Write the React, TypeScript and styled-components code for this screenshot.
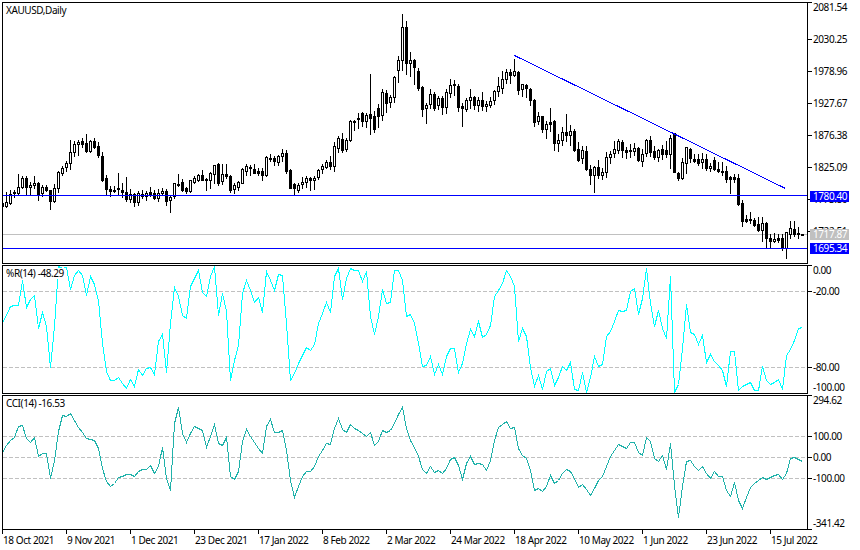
import styled, { createGlobalStyle } from 'styled-components';

// all chart values are read off the 3x crops, so y values are divided by 3 below
type Candle = [number, number, number, number, number];

const candles: Candle[] = [
  [610, 610, 618, 618, 0], [577, 607, 618, 621, 1], [570, 584, 609, 612, 1], [570, 578, 581, 592, 1],
  [523, 562, 581, 585, 1], [528, 535, 562, 565, 1], [530, 535, 562, 585, 0], [548, 556, 562, 582, 1],
  [530, 550, 556, 565, 1], [547, 550, 582, 601, 0], [556, 562, 581, 590, 1], [556, 562, 571, 574, 0],
  [571, 571, 604, 629, 0], [553, 565, 604, 606, 1], [514, 517, 565, 578, 1], [499, 505, 520, 526, 1],
  [484, 490, 502, 514, 1], [420, 457, 490, 508, 1], [423, 433, 457, 468, 1], [420, 427, 433, 465, 1],
  [415, 424, 433, 442, 0], [403, 430, 454, 457, 0], [421, 424, 454, 457, 1], [414, 424, 441, 445, 0],
  [427, 439, 465, 472, 0], [457, 469, 541, 544, 0], [526, 535, 568, 585, 0], [559, 568, 574, 590, 0],
  [559, 571, 573, 577, 0], [519, 565, 569, 587, 0], [550, 571, 578, 592, 0], [532, 577, 599, 604, 0],
  [568, 584, 599, 607, 1], [580, 583, 608, 620, 0], [574, 580, 608, 616, 1], [571, 584, 590, 596, 1],
  [574, 581, 590, 602, 1], [562, 577, 586, 590, 0], [572, 581, 596, 599, 0], [569, 581, 596, 605, 1],
  [565, 573, 581, 584, 1], [568, 574, 605, 617, 0], [590, 592, 602, 638, 1], [550, 550, 590, 596, 1],
  [522, 552, 555, 558, 0], [538, 547, 570, 574, 0], [562, 565, 574, 580, 0], [541, 541, 574, 576, 1],
  [529, 535, 547, 550, 1], [522, 526, 540, 543, 1], [511, 526, 540, 541, 0], [535, 538, 541, 570, 0],
  [517, 520, 541, 565, 1], [496, 496, 523, 550, 1], [490, 492, 550, 556, 0], [493, 523, 544, 553, 1],
  [492, 523, 530, 534, 0], [526, 529, 570, 577, 0], [550, 556, 568, 581, 1], [544, 547, 561, 571, 1],
  [505, 508, 549, 551, 1], [493, 499, 513, 526, 1], [496, 502, 505, 526, 0], [493, 508, 519, 521, 0],
  [505, 514, 520, 526, 0], [505, 514, 525, 540, 0], [469, 472, 525, 530, 1], [463, 475, 478, 483, 0],
  [468, 474, 485, 496, 0], [466, 468, 487, 496, 1], [448, 460, 469, 484, 1], [452, 460, 515, 521, 0],
  [508, 510, 565, 565, 0], [550, 552, 566, 585, 0], [550, 556, 571, 578, 1], [531, 547, 553, 565, 1],
  [529, 535, 547, 562, 1], [532, 535, 541, 572, 0], [529, 535, 541, 568, 1], [508, 511, 532, 538, 1],
  [493, 499, 508, 520, 1], [481, 487, 502, 505, 1], [469, 487, 500, 508, 0], [426, 439, 500, 514, 1],
  [408, 415, 446, 456, 1], [400, 417, 450, 456, 0], [414, 420, 448, 454, 1], [361, 364, 420, 423, 1],
  [360, 364, 367, 390, 0], [340, 354, 359, 385, 0], [336, 340, 365, 380, 0], [340, 345, 365, 382, 1],
  [222, 342, 356, 404, 0], [335, 349, 387, 396, 0], [313, 324, 348, 382, 0], [267, 277, 347, 360, 1],
  [271, 280, 310, 338, 0], [285, 292, 308, 322, 1], [229, 232, 292, 308, 1], [168, 181, 212, 248, 1],
  [42, 82, 181, 212, 1], [63, 82, 190, 222, 0], [157, 181, 190, 230, 1], [178, 181, 203, 254, 0],
  [205, 214, 266, 270, 0], [259, 262, 328, 350, 0], [310, 316, 325, 371, 1], [268, 283, 314, 325, 1],
  [277, 283, 325, 330, 0], [290, 295, 317, 328, 1], [289, 295, 322, 344, 0], [268, 277, 322, 340, 1],
  [238, 256, 281, 293, 1], [240, 252, 257, 285, 0], [253, 258, 323, 333, 0], [310, 319, 325, 380, 0],
  [295, 302, 328, 333, 1], [268, 292, 301, 326, 1], [289, 292, 316, 327, 0], [292, 301, 317, 335, 1],
  [277, 301, 320, 330, 0], [303, 313, 320, 335, 1], [292, 304, 316, 323, 1], [271, 274, 301, 312, 1],
  [232, 259, 274, 288, 1], [214, 238, 265, 280, 1], [208, 217, 239, 250, 1], [208, 217, 227, 251, 0],
  [178, 214, 227, 230, 1], [214, 217, 272, 283, 0], [252, 253, 268, 290, 1], [253, 256, 266, 293, 0],
  [265, 268, 302, 315, 0], [298, 301, 367, 380, 0], [337, 349, 365, 373, 1], [349, 349, 389, 397, 0],
  [364, 373, 388, 416, 1], [324, 367, 372, 395, 0], [361, 364, 430, 451, 0], [404, 421, 430, 455, 1],
  [381, 397, 421, 435, 1], [343, 397, 405, 425, 0], [376, 394, 406, 437, 1], [388, 394, 450, 454, 0],
  [427, 448, 480, 484, 0], [438, 450, 476, 490, 1], [438, 453, 508, 510, 0], [495, 507, 526, 552, 0],
  [498, 501, 525, 576, 1], [480, 502, 525, 535, 0], [505, 516, 525, 537, 1], [456, 472, 518, 531, 1],
  [453, 462, 471, 489, 1], [424, 448, 460, 472, 1], [418, 424, 450, 460, 1], [420, 426, 450, 472, 0],
  [442, 450, 456, 474, 0], [432, 451, 454, 472, 0], [430, 444, 453, 465, 1], [442, 444, 480, 485, 0],
  [448, 462, 483, 498, 1], [418, 420, 460, 468, 1], [408, 420, 456, 468, 0], [440, 453, 471, 478, 0],
  [447, 450, 472, 483, 1], [435, 448, 462, 477, 0], [425, 450, 462, 471, 0], [405, 415, 462, 504, 1],
  [399, 400, 516, 518, 0], [516, 519, 534, 540, 0], [475, 487, 536, 537, 1], [441, 442, 489, 520, 1],
  [446, 448, 475, 486, 0], [462, 477, 484, 487, 0], [462, 477, 489, 497, 0], [460, 477, 488, 504, 1],
  [463, 477, 506, 510, 0], [490, 498, 506, 515, 1], [472, 481, 507, 512, 0], [487, 507, 513, 517, 0],
  [486, 513, 515, 527, 0], [498, 513, 537, 548, 0], [530, 531, 537, 580, 0], [524, 531, 537, 546, 0],
  [522, 534, 614, 617, 0], [602, 610, 665, 678, 0], [645, 657, 663, 668, 0], [637, 657, 662, 671, 0],
  [654, 660, 675, 678, 0], [651, 672, 690, 695, 0], [651, 669, 690, 725, 1], [666, 669, 716, 745, 0],
  [702, 714, 725, 745, 0], [700, 717, 725, 727, 1], [703, 714, 722, 728, 0], [702, 714, 745, 752, 0],
  [697, 697, 745, 774, 1], [663, 685, 704, 714, 1], [665, 687, 702, 710, 0], [681, 699, 702, 714, 0],
  [702, 702, 705, 705, 0],
];

const wpr = [
  188, 165, 140, 136, 136, 62, 143, 118, 106, 206, 157, 198, 322, 200, 20, 25, 22, 88, 45, 30,
  45, 105, 48, 72, 120, 250, 335, 362, 362, 352, 370, 385, 358, 380, 327, 345, 325, 322, 344, 245,
  222, 338, 190, 82, 110, 165, 175, 80, 55, 30, 98, 110, 50, 18, 165, 100, 155, 362, 300, 255,
  100, 62, 92, 128, 113, 157, 35, 60, 92, 44, 47, 190, 360,
  340, 310, 285, 262, 270, 252, 190, 160, 127, 157, 50, 25, 118, 55, 25, 32, 32, 65, 35, 170,
  222, 170, 88, 130, 127, 30, 30, 60, 170, 163, 190, 250, 320, 316, 290, 343, 313, 343, 290, 265,
  265, 337, 310, 250, 208, 230, 183, 232, 222, 195, 110, 90, 70, 30, 50, 78, 243, 205, 228, 322,
  378, 345, 388, 335, 325, 375, 352, 320, 330,
  307, 388, 390, 338, 397, 352, 290, 318, 312, 228, 215, 185, 150, 155, 150, 95, 85, 163, 115, 25,
  130, 200, 150, 205, 235, 48, 397, 372, 265, 133, 218, 222, 252, 226, 306, 283, 305, 315, 330,
  380, 274, 275, 390, 378, 372, 366, 391, 391, 318, 362, 372, 366, 358, 388, 285, 268, 240, 205, 202,
];

const cci = [
  578, 556, 541, 532, 500, 497, 535, 547, 532, 590, 580, 580, 655, 600, 515, 466, 470, 460, 480, 502,
  518, 535, 537, 542, 565, 625, 665, 680, 670, 652, 650, 644, 642, 648, 634, 628, 628, 616, 640, 620,
  562, 655, 690, 490, 441, 520, 547, 520, 500, 505, 512, 562, 530, 492, 550, 555, 532, 650, 658, 635,
  545, 508, 530, 548, 565, 580, 500, 478, 517, 517, 511, 570, 660,
  712, 680, 648, 634, 634, 620, 590, 570, 550, 552, 505, 475, 508, 517, 493, 505, 512, 520, 529, 517,
  556, 545, 511, 517, 512, 490, 462, 441, 505, 540, 562, 590, 628, 640, 619, 636, 630, 639, 625, 597,
  593, 617, 658, 610, 590, 613, 610, 613, 630, 600, 540, 502, 492, 485, 505, 502, 565, 585, 595, 630,
  690, 685, 693, 680, 647, 669, 662, 640, 628,
  633, 655, 682, 673, 688, 706, 685, 660, 650, 618, 590, 570, 552, 558, 565, 547, 547, 578, 585, 532,
  545, 594, 605, 586, 628, 550, 675, 772, 680, 605, 602, 618, 632, 618, 640, 655, 633, 650, 650, 690,
  710, 668, 722, 745, 712, 682, 670, 660, 652, 658, 652, 645, 644, 658, 640, 595, 593, 598, 604,
];

const dates = [
  '18 Oct 2021', '9 Nov 2021', '1 Dec 2021', '23 Dec 2021', '17 Jan 2022', '8 Feb 2022', '2 Mar 2022',
  '24 Mar 2022', '18 Apr 2022', '10 May 2022', '1 Jun 2022', '23 Jun 2022', '15 Jul 2022',
];

type Price = { text: string; space: number; tick?: boolean };

const mainPrices: Price[] = [
  { text: '2081.54', space: 11 },
  { text: '2030.25', space: 32, tick: true },
  { text: '1978.96', space: 32, tick: true },
  { text: '1927.67', space: 32, tick: true },
  { text: '1876.38', space: 32, tick: true },
  { text: '1825.09', space: 32, tick: true },
  { text: '1773.80', space: 32, tick: true },
  { text: '1722.51', space: 32, tick: true },
];

const wprPrices: Price[] = [
  { text: '0.00', space: 11 },
  { text: '-20.00', space: 21, tick: true },
  { text: '-80.00', space: 76, tick: true },
  { text: '-100.00', space: 20 },
];

const cciPrices: Price[] = [
  { text: '294.62', space: 11 },
  { text: '100.00', space: 36, tick: true },
  { text: '0.00', space: 21, tick: true },
  { text: '-100.00', space: 21, tick: true },
  { text: '-341.42', space: 45 },
];

const GlobalStyle = createGlobalStyle`
  html, body {
    margin: 0;
    background: #fff;
    overflow: hidden;
  }
`;

const Chart = styled.div`
  width: 860px;
  height: 550px;
  box-sizing: border-box;
  padding: 2px 0 0 2px;
  background: #fff;
  color: #000;
  font-family: 'Noto Sans', 'Liberation Sans', sans-serif;
  font-size: 10px;
  letter-spacing: -0.42px;
`;

const PaneRow = styled.div<{ $height: number }>`
  display: flex;
  height: ${(p) => p.$height}px;
  margin-bottom: 1px;
`;

const PlotArea = styled.div`
  position: relative;
  width: 806px;
  box-sizing: border-box;
  border: 1px solid #000;

  svg {
    display: block;
    width: 804px;
    height: 100%;
    shape-rendering: crispEdges;
  }
`;

const PaneTitle = styled.span`
  position: absolute;
  left: 3px;
  top: 2px;
  padding-right: 1px;
  line-height: 11px;
  background: #fff;
  white-space: nowrap;
`;

const PriceScale = styled.div<{ $topTick?: boolean; $bottomTick?: boolean }>`
  position: relative;
  flex: 1;
  display: flex;
  flex-direction: column;

  &::before {
    content: '';
    display: ${(p) => (p.$topTick ? 'block' : 'none')};
    position: absolute;
    left: 0;
    top: 0;
    width: 4px;
    height: 1px;
    background: #000;
  }

  &::after {
    content: '';
    display: ${(p) => (p.$bottomTick ? 'block' : 'none')};
    position: absolute;
    left: 0;
    bottom: 0;
    width: 4px;
    height: 1px;
    background: #000;
  }
`;

const PriceRow = styled.div<{ $space: number }>`
  flex: none;
  height: ${(p) => p.$space}px;
  display: flex;
  align-items: flex-end;
`;

const PriceEntry = styled.div`
  height: 12px;
  display: flex;
  align-items: center;
  gap: 1px;
  line-height: 12px;
  white-space: nowrap;
`;

const Tick = styled.i<{ $visible?: boolean }>`
  width: 4px;
  height: 1px;
  background: ${(p) => (p.$visible ? '#000' : 'transparent')};
`;

// current values sit over the scale labels, as they do in the terminal
const PriceTag = styled.span<{ $top: number; $color: string }>`
  position: absolute;
  left: 2px;
  top: ${(p) => p.$top}px;
  width: 39px;
  height: 11px;
  padding-left: 3px;
  box-sizing: border-box;
  line-height: 11px;
  color: #fff;
  background: ${(p) => p.$color};
`;

const TimeAxis = styled.div`
  display: grid;
  grid-template-columns: repeat(13, 64px);
  margin-top: -1px;
`;

const TimeCell = styled.div`
  position: relative;
  height: 16px;
  padding: 5px 0 0 1px;
  box-sizing: border-box;
  line-height: 11px;
  white-space: nowrap;

  &::before {
    content: '';
    position: absolute;
    left: 0;
    top: 0;
    width: 1px;
    height: 4px;
    background: #000;
  }
`;

const toLine = (values: number[], originY: number) =>
  values
    .map((v, k) => `${2 + 4 * k + 0.5},${originY + Math.floor(v / 3) + 0.5}`)
    .join(' ');

function Candles() {
  return (
    <g>
      {candles.map(([hi, top, bot, lo, up], k) => {
        const x = 2 + 4 * k;
        const t = Math.floor(top / 3);
        const b = Math.floor(bot / 3);
        return (
          <g key={k}>
            <line x1={x + 0.5} x2={x + 0.5} y1={Math.floor(hi / 3)} y2={Math.floor(lo / 3) + 1} stroke="#000" />
            <rect
              x={x - 0.5}
              y={t + 0.5}
              width={2}
              height={Math.max(b - t, 1)}
              fill={up ? '#fff' : '#000'}
              stroke="#000"
            />
          </g>
        );
      })}
    </g>
  );
}

function Levels({ levels }: { levels: number[] }) {
  return (
    <g>
      {levels.map((y) => (
        <line key={y} x1={3} x2={807} y1={y + 0.5} y2={y + 0.5} stroke="#c0c0c0" strokeDasharray="4 2" />
      ))}
    </g>
  );
}

function PriceRows({ prices }: { prices: Price[] }) {
  return (
    <>
      {prices.map((p) => (
        <PriceRow key={p.text} $space={p.space}>
          <PriceEntry>
            <Tick $visible={p.tick} />
            {p.text}
          </PriceEntry>
        </PriceRow>
      ))}
    </>
  );
}

export default function App() {
  return (
    <>
      <GlobalStyle />
      <Chart>
        <PaneRow $height={262}>
          <PlotArea>
            <svg viewBox="3 3 804 260">
              <line x1={3} x2={807} y1={234.5} y2={234.5} stroke="#c0c0c0" />
              <Candles />
              <line x1={3} x2={807} y1={195.5} y2={195.5} stroke="#0000ff" />
              <line x1={3} x2={807} y1={248.5} y2={248.5} stroke="#0000ff" />
              <line x1={514.5} x2={785.5} y1={55.5} y2={188.5} stroke="#0000ff" />
            </svg>
            <PaneTitle>XAUUSD,Daily</PaneTitle>
          </PlotArea>
          <PriceScale $topTick>
            <PriceRows prices={mainPrices} />
            <PriceTag $top={189} $color="#0000ff">1780.40</PriceTag>
            <PriceTag $top={227} $color="#c0c0c0">1717.87</PriceTag>
            <PriceTag $top={241} $color="#0000ff">1695.34</PriceTag>
          </PriceScale>
        </PaneRow>

        <PaneRow $height={129}>
          <PlotArea>
            <svg viewBox="3 266 804 127">
              <Levels levels={[291, 367]} />
              <polyline points={toLine(wpr, 260)} fill="none" stroke="#00ffff" />
            </svg>
            <PaneTitle>%R(14) -48.29</PaneTitle>
          </PlotArea>
          <PriceScale $topTick>
            <PriceRows prices={wprPrices} />
          </PriceScale>
        </PaneRow>

        <PaneRow $height={135}>
          <PlotArea>
            <svg viewBox="3 396 804 133">
              <Levels levels={[436, 457, 478]} />
              <polyline points={toLine(cci, 260)} fill="none" stroke="#20b2aa" />
            </svg>
            <PaneTitle>CCI(14) -16.53</PaneTitle>
          </PlotArea>
          <PriceScale $topTick $bottomTick>
            <PriceRows prices={cciPrices} />
          </PriceScale>
        </PaneRow>

        <TimeAxis>
          {dates.map((d) => (
            <TimeCell key={d}>{d}</TimeCell>
          ))}
        </TimeAxis>
      </Chart>
    </>
  );
}
